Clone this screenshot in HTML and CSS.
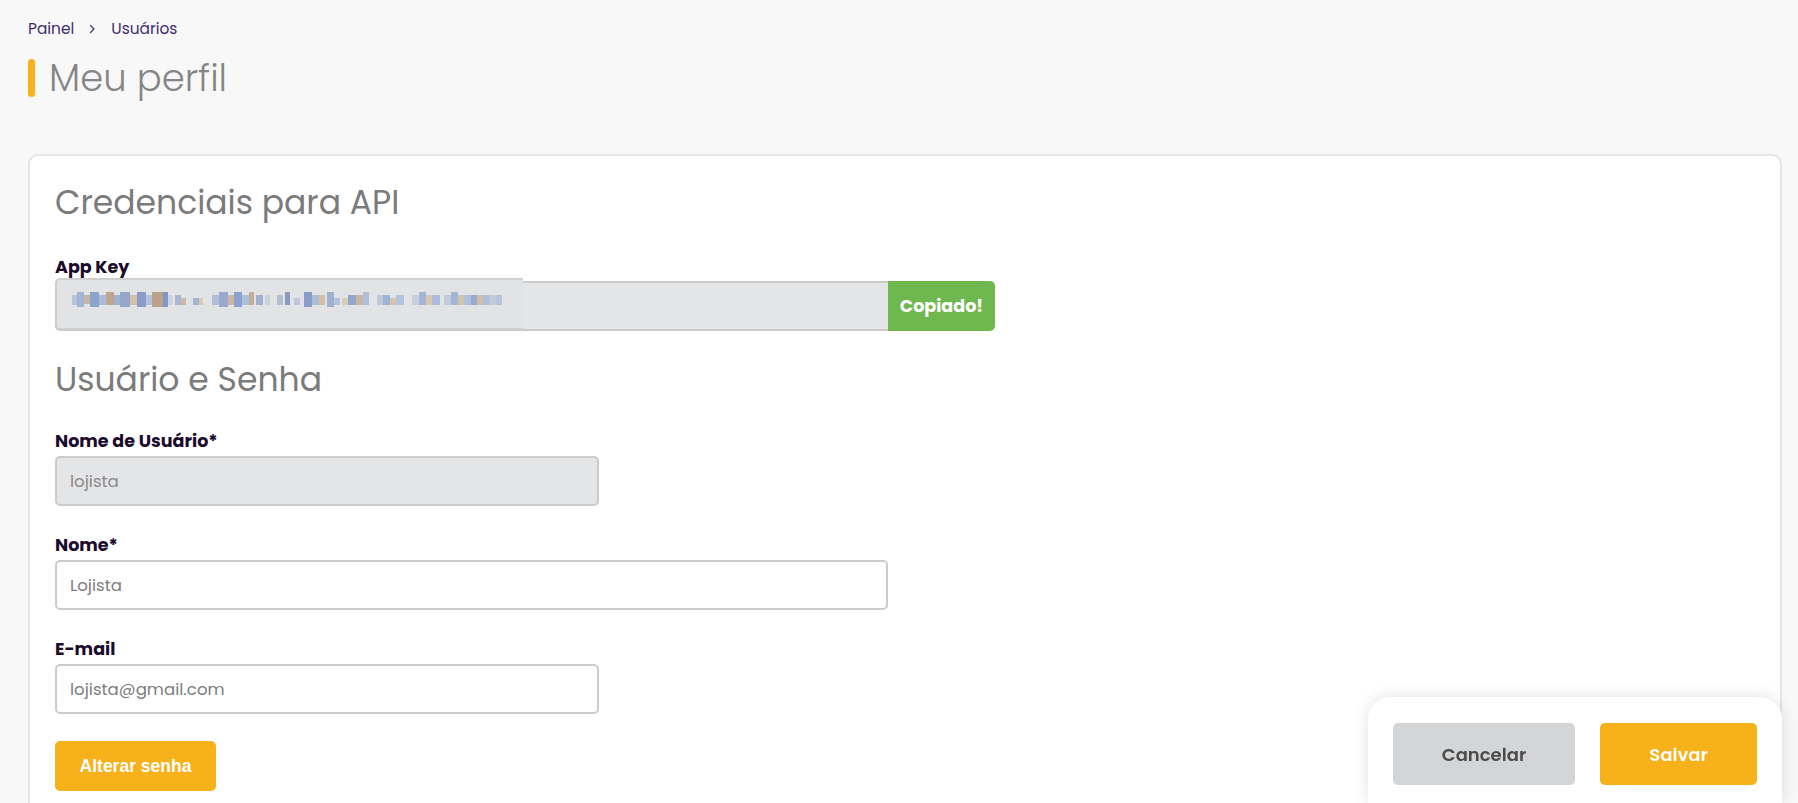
FILE: index.html
```html
<!DOCTYPE html>
<html lang="pt-BR">
<head>
    <meta charset="UTF-8">
    <meta name="viewport" content="width=device-width, initial-scale=1.0">
    <title>Meu perfil</title>
    <link rel="stylesheet" href="styles.css">
</head>
<body>
    <div class="page">
        <nav class="breadcrumb">
            <a href="#">Painel</a>
            <svg class="crumb-sep" width="7" height="10" viewBox="0 0 7 10"><path d="M1.5 1.5 L5 5 L1.5 8.5" fill="none" stroke="#4a3a78" stroke-width="1.4" stroke-linecap="round" stroke-linejoin="round"/></svg>
            <a href="#">Usuários</a>
        </nav>

        <div class="page-title">
            <span class="title-bar"></span>
            <h1>Meu perfil</h1>
        </div>

        <section class="card">
            <h2 class="section-title first">Credenciais para API</h2>

            <div class="field field-key">
                <label>App Key</label>
                <div class="input-group">
                    <div class="key-input">
                        <!-- chave mascarada -->
                        <div class="key-mask">
                            <svg width="432" height="15" viewBox="0 0 432 15" shape-rendering="crispEdges">
                                <rect x="0" y="3" width="5" height="10" fill="#a9b9d3"/>
                                <rect x="5" y="0" width="7" height="15" fill="#8ea6cf"/>
                                <rect x="12" y="3" width="6" height="9" fill="#c1a58e"/>
                                <rect x="18" y="0" width="9" height="15" fill="#6f8fc4"/>
                                <rect x="27" y="3" width="7" height="10" fill="#9aaedb"/>
                                <rect x="34" y="0" width="8" height="13" fill="#b3926f"/>
                                <rect x="42" y="3" width="6" height="10" fill="#8aa2cc"/>
                                <rect x="48" y="0" width="10" height="15" fill="#7c93c0"/>
                                <rect x="58" y="3" width="7" height="10" fill="#d0b49a"/>
                                <rect x="65" y="0" width="9" height="15" fill="#6d86bd"/>
                                <rect x="74" y="3" width="6" height="10" fill="#a3b6da"/>
                                <rect x="80" y="0" width="11" height="15" fill="#b08a6c"/>
                                <rect x="91" y="0" width="5" height="15" fill="#5f7fbf"/>
                                <rect x="96" y="3" width="5" height="10" fill="#c8cfdc"/>
                                <rect x="103" y="3" width="6" height="10" fill="#96a9cc"/>
                                <rect x="109" y="6" width="5" height="7" fill="#c4ad93"/>
                                <rect x="121" y="6" width="6" height="7" fill="#8fa5d0"/>
                                <rect x="127" y="6" width="4" height="7" fill="#d8c29e"/>
                                <rect x="140" y="3" width="7" height="10" fill="#a2b2cf"/>
                                <rect x="147" y="0" width="9" height="15" fill="#7e97c6"/>
                                <rect x="156" y="3" width="6" height="10" fill="#c6a888"/>
                                <rect x="162" y="0" width="8" height="15" fill="#6f8cc9"/>
                                <rect x="170" y="3" width="7" height="10" fill="#9fb3d8"/>
                                <rect x="177" y="0" width="5" height="13" fill="#b99d84"/>
                                <rect x="184" y="3" width="7" height="10" fill="#8ba1cb"/>
                                <rect x="193" y="3" width="5" height="10" fill="#c8ccd6"/>
                                <rect x="205" y="3" width="6" height="10" fill="#a7b4cb"/>
                                <rect x="213" y="0" width="5" height="13" fill="#6f84ad"/>
                                <rect x="222" y="6" width="6" height="7" fill="#b3bfd6"/>
                                <rect x="232" y="0" width="8" height="15" fill="#6c86c0"/>
                                <rect x="240" y="3" width="7" height="10" fill="#9db0d5"/>
                                <rect x="247" y="3" width="6" height="10" fill="#cdb38f"/>
                                <rect x="255" y="0" width="7" height="15" fill="#8aa0c8"/>
                                <rect x="262" y="6" width="6" height="7" fill="#a7b8d8"/>
                                <rect x="270" y="6" width="6" height="7" fill="#d4c6ae"/>
                                <rect x="276" y="3" width="8" height="10" fill="#7892c4"/>
                                <rect x="284" y="3" width="7" height="10" fill="#c0a78b"/>
                                <rect x="291" y="0" width="6" height="13" fill="#9fb2d6"/>
                                <rect x="305" y="3" width="6" height="10" fill="#b5c1d6"/>
                                <rect x="311" y="3" width="7" height="10" fill="#8aa3d0"/>
                                <rect x="318" y="6" width="6" height="7" fill="#cfbb9c"/>
                                <rect x="324" y="3" width="8" height="10" fill="#a5b8da"/>
                                <rect x="340" y="3" width="7" height="10" fill="#c2c9d6"/>
                                <rect x="347" y="0" width="7" height="13" fill="#8ea7d1"/>
                                <rect x="354" y="3" width="6" height="10" fill="#d3bf9f"/>
                                <rect x="360" y="3" width="8" height="10" fill="#9bb0d6"/>
                                <rect x="372" y="3" width="7" height="10" fill="#b8c4d8"/>
                                <rect x="379" y="0" width="7" height="13" fill="#8fa7cf"/>
                                <rect x="386" y="3" width="6" height="10" fill="#cbb89b"/>
                                <rect x="392" y="3" width="7" height="10" fill="#a1b5d8"/>
                                <rect x="399" y="3" width="6" height="10" fill="#7f98c6"/>
                                <rect x="405" y="3" width="6" height="10" fill="#c9b496"/>
                                <rect x="411" y="3" width="7" height="10" fill="#9fb3d6"/>
                                <rect x="418" y="3" width="6" height="10" fill="#b7c2d6"/>
                                <rect x="424" y="3" width="6" height="10" fill="#a9bad8"/>
                            </svg>
                        </div>
                    </div>
                    <button class="btn-copy">Copiado!</button>
                </div>
            </div>

            <h2 class="section-title">Usuário e Senha</h2>

            <div class="field">
                <label>Nome de Usuário*</label>
                <input class="input input-short input-disabled" type="text" value="lojista" readonly>
            </div>

            <div class="field">
                <label>Nome*</label>
                <input class="input input-long" type="text" value="Lojista" readonly>
            </div>

            <div class="field">
                <label>E-mail</label>
                <input class="input input-short" type="text" value="lojista@gmail.com" readonly>
            </div>

            <button class="btn-password">Alterar senha</button>
        </section>

        <div class="action-bar">
            <button class="btn-cancel">Cancelar</button>
            <button class="btn-save">Salvar</button>
        </div>
    </div>
</body>
</html>
```

FILE: styles.css
```css
html, body {
    margin: 0;
    padding: 0;
}

body {
    font-family: Poppins, Inter, sans-serif;
    background-color: #f8f8f8;
    color: #333;
}

.page {
    height: 100vh;
    overflow: hidden;
    box-sizing: border-box;
    padding: 18px 16px 0 28px;
}

/* fil d'ariane */
.breadcrumb {
    display: flex;
    align-items: center;
    gap: 15px;
    height: 22px;
    font-size: 15.4px;
    line-height: 22px;
}

.breadcrumb a {
    color: #3f2d6d;
    text-decoration: none;
}

.crumb-sep {
    display: block;
}

.page-title {
    display: flex;
    align-items: center;
    gap: 14px;
    margin-top: 19px;
    height: 38px;
}

.title-bar {
    width: 7px;
    height: 38px;
    border-radius: 4px;
    background-color: #f6b11b;
}

.page-title h1 {
    margin: 0;
    font-size: 37px;
    line-height: 38px;
    font-weight: 300;
    color: #858585;
}

/* carte principale */
.card {
    margin-top: 57px;
    background-color: #fff;
    border: 2px solid #e6e6e6;
    border-radius: 10px;
    padding: 27px 25px 40px;
}

.section-title {
    margin: 29px 0 29px;
    font-size: 33px;
    line-height: 40px;
    font-weight: 400;
    color: #7b7b7b;
}

.section-title.first {
    margin-top: 0;
    margin-bottom: 32px;
}

.field {
    margin-bottom: 27px;
}

.field-key {
    margin-bottom: 0;
}

.field label {
    display: block;
    margin-bottom: 3px;
    font-size: 17.5px;
    line-height: 24px;
    font-weight: 700;
    color: #1c0b2b;
}

.field-key label {
    margin-bottom: 2px;
}

.input {
    display: block;
    box-sizing: border-box;
    height: 50px;
    padding: 0 13px;
    border: 2px solid #cbcbcb;
    border-radius: 5px;
    background-color: #fff;
    font-family: inherit;
    font-size: 16.6px;
    color: #7d7d7d;
    outline: none;
}

.input-short {
    width: 544px;
}

.input-long {
    width: 833px;
}

.input-disabled {
    background-color: #e4e5e7;
    color: #8a8a8a;
}

.input-group {
    display: flex;
}

.key-input {
    position: relative;
    box-sizing: border-box;
    width: 833px;
    height: 50px;
    border: 2px solid #cbcbcb;
    border-right: none;
    border-radius: 5px 0 0 5px;
    background-color: #e4e5e7;
}

/* capture floutée collée par-dessus la clé */
.key-mask {
    position: absolute;
    left: -2px;
    top: -5px;
    width: 468px;
    height: 52px;
    box-sizing: border-box;
    border-top: 2px solid #cfcfcf;
    border-bottom: 2px solid #cfcfcf;
    border-left: 2px solid #cbcbcb;
    border-radius: 5px 0 0 5px;
    background-color: #e2e3e5;
    padding: 12px 0 0 15px;
}

.key-mask svg {
    display: block;
    opacity: 0.75;
}

.btn-copy {
    width: 107px;
    height: 50px;
    border: none;
    border-radius: 0 5px 5px 0;
    background-color: #6fb84f;
    color: #fff;
    font-family: inherit;
    font-size: 17.5px;
    font-weight: 700;
    cursor: pointer;
}

.btn-password {
    display: block;
    margin-top: 22px;
    width: 161px;
    height: 50px;
    border: none;
    border-radius: 5px;
    background-color: #f6b11b;
    color: #fff;
    font-family: "Liberation Sans", Arial, sans-serif;
    font-size: 17.5px;
    font-weight: 700;
    cursor: pointer;
}

/* barre d'actions flottante */
.action-bar {
    position: fixed;
    right: 16px;
    bottom: 0;
    width: 414px;
    height: 106px;
    box-sizing: border-box;
    display: flex;
    gap: 25px;
    padding: 26px 25px 0;
    background-color: #fff;
    border-radius: 22px 22px 0 0;
    box-shadow: 0 0 16px rgba(0, 0, 0, 0.12);
}

.action-bar button {
    height: 62px;
    border: none;
    border-radius: 5px;
    font-family: inherit;
    font-size: 18px;
    font-weight: 600;
    cursor: pointer;
}

.btn-cancel {
    width: 182px;
    background-color: #d4d5d7;
    color: #4b4b4b;
}

.btn-save {
    width: 157px;
    background-color: #f6b11b;
    color: #fff;
}
```
